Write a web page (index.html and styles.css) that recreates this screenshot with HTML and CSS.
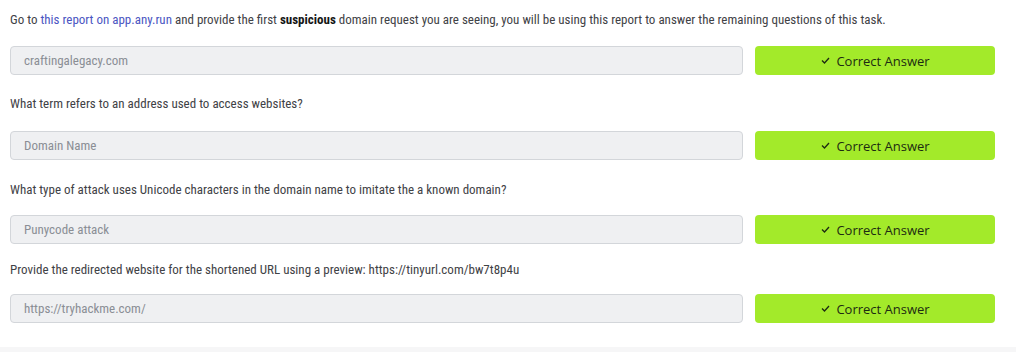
FILE: index.html
```html
<!doctype html>
<html>
	<head>
		<meta charset="utf-8">
		<title>Task</title>
		<link rel="stylesheet" href="styles.css">
	</head>
	<body>
		<div class="task">
			<div class="question q1">
				<p class="text">Go to <a href="#">this report on app.any.run</a> and provide the first <b>suspicious</b> domain request you are seeing, you will be using this report to answer the remaining questions of this task.</p>
				<div class="row">
					<div class="answer">craftingalegacy.com</div>
					<button class="correct"><svg class="tick" width="9" height="7" viewBox="0 0 9 7"><path d="M1 3.5 L3.5 6 L8 1" fill="none" stroke="currentColor" stroke-width="1.3"/></svg>Correct Answer</button>
				</div>
			</div>
			<div class="question q2">
				<p class="text">What term refers to an address used to access websites?</p>
				<div class="row">
					<div class="answer">Domain Name</div>
					<button class="correct"><svg class="tick" width="9" height="7" viewBox="0 0 9 7"><path d="M1 3.5 L3.5 6 L8 1" fill="none" stroke="currentColor" stroke-width="1.3"/></svg>Correct Answer</button>
				</div>
			</div>
			<div class="question q3">
				<p class="text">What type of attack uses Unicode characters in the domain name to imitate the a known domain?</p>
				<div class="row">
					<div class="answer">Punycode attack</div>
					<button class="correct"><svg class="tick" width="9" height="7" viewBox="0 0 9 7"><path d="M1 3.5 L3.5 6 L8 1" fill="none" stroke="currentColor" stroke-width="1.3"/></svg>Correct Answer</button>
				</div>
			</div>
			<div class="question q4">
				<p class="text">Provide the redirected website for the shortened URL using a preview: https://tinyurl.com/bw7t8p4u</p>
				<div class="row">
					<div class="answer">https://tryhackme.com/</div>
					<button class="correct"><svg class="tick" width="9" height="7" viewBox="0 0 9 7"><path d="M1 3.5 L3.5 6 L8 1" fill="none" stroke="currentColor" stroke-width="1.3"/></svg>Correct Answer</button>
				</div>
			</div>
		</div>
		<div class="footer"></div>
	</body>
</html>
```

FILE: styles.css
```css
body {
	margin: 0;
	background: #fff;
	font-family: "Roboto Condensed", "Liberation Sans", sans-serif;
	color: #3f4246;
}

.task {
	padding: 11px 21px 0 10px;
	height: 336px;
}

.q1 {
	margin-bottom: 20px;
}

.q2 {
	margin-bottom: 21px;
}

.q3 {
	margin-bottom: 17px;
}

.text {
	margin: 0 0 17px;
	font-size: 13px;
	line-height: 18px;
}

.q2 .text {
	margin-bottom: 18px;
}

.q3 .text {
	margin-bottom: 16px;
}

.q4 .text {
	margin-bottom: 15px;
}

.text a {
	color: #4b56c2;
	text-decoration: none;
}

.text b {
	color: #151515;
}

.row {
	display: flex;
	gap: 12px;
}

.answer {
	flex: 1;
	height: 27px;
	line-height: 27px;
	padding: 0 13px;
	background: #eff0f2;
	border: 1px solid #d3d6da;
	border-radius: 4px;
	font-size: 13px;
	color: #8a8e95;
}

.correct {
	display: flex;
	align-items: center;
	justify-content: center;
	gap: 6px;
	width: 240px;
	height: 29px;
	border: 0;
	border-radius: 4px;
	background: #a3ea2a;
	color: #1d2a12;
	font-family: "Open Sans", "Liberation Sans", sans-serif;
	font-size: 13px;
	padding: 0 0 0 1px;
}

.tick {
	display: block;
}

.footer {
	height: 5px;
	background: #f6f6f7;
}
```
